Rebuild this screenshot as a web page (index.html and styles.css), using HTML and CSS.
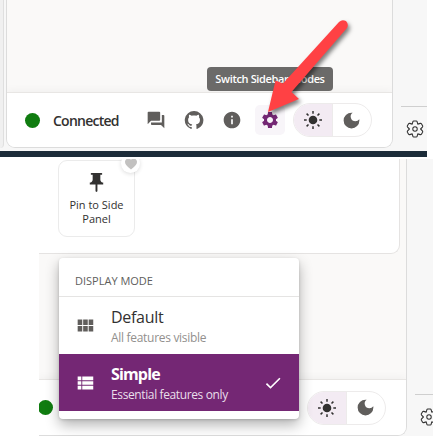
FILE: index.html
```
<!DOCTYPE html>
<html lang="en">
<head>
<meta charset="utf-8">
<title>Switch Sidebar Modes</title>
<link rel="stylesheet" href="styles.css">
</head>
<body>
<svg class="symbols" aria-hidden="true">
  <symbol id="sun" viewBox="-10 -10 20 20"><circle r="4.3"/><path d="M0-9v2.7M0 9V6.3M-9 0h2.7M9 0H6.3M-6.4-6.4l1.9 1.9M6.4-6.4l-1.9 1.9M-6.4 6.4l1.9-1.9M6.4 6.4l-1.9-1.9" stroke="currentColor" stroke-width="1.5"/></symbol>
  <symbol id="moon" viewBox="0 0 24 24"><path d="M12 3a9 9 0 1 0 9 9c0-.46-.04-.92-.1-1.36a5.39 5.39 0 0 1-4.4 2.26 5.4 5.4 0 0 1-3.14-9.8c-.44-.06-.9-.1-1.36-.1z"/></symbol>
  <symbol id="outline-gear" viewBox="-9 -9 18 18"><path d="M5.6 0L7.4 1.9Q7.9 2.5 7.6 3.2L6.4 5.2Q6 5.8 5.2 5.6L2.8 4.9L2.1 7.3Q1.9 8 1.2 8H-1.2Q-1.9 8-2.1 7.3L-2.8 4.9L-5.2 5.6Q-6 5.8-6.4 5.2L-7.6 3.2Q-7.9 2.5-7.4 1.9L-5.6 0L-7.4-1.9Q-7.9-2.5-7.6-3.2L-6.4-5.2Q-6-5.8-5.2-5.6L-2.8-4.9L-2.1-7.3Q-1.9-8-1.2-8H1.2Q1.9-8 2.1-7.3L2.8-4.9L5.2-5.6Q6-5.8 6.4-5.2L7.6-3.2Q7.9-2.5 7.4-1.9Z" fill="none" stroke="currentColor" stroke-width="1.1" stroke-linejoin="round"/><circle r="2.2" fill="none" stroke="currentColor" stroke-width="1.1"/></symbol>
</svg>

<section class="shot shot-top">
  <div class="neighbor"></div>
  <main class="panel">
    <footer class="bar">
      <span class="dot"></span>
      <span class="status">Connected</span>
      <nav class="actions">
        <button class="action"><svg width="20" height="20" viewBox="0 0 24 24"><path d="M21 6h-2v9H6v2c0 .55.45 1 1 1h11l4 4V7c0-.55-.45-1-1-1zm-4 6V3c0-.55-.45-1-1-1H3c-.55 0-1 .45-1 1v14l4-4h10c.55 0 1-.45 1-1z"/></svg></button>
        <button class="action"><svg width="20" height="20" viewBox="0 0 24 24"><path d="M12 1.27a11 11 0 0 0-3.48 21.46c.55.09.73-.28.73-.55v-1.84c-3.03.64-3.67-1.46-3.67-1.46-.55-1.29-1.28-1.65-1.28-1.65-.92-.65.1-.65.1-.65 1.1 0 1.73 1.1 1.73 1.1.92 1.65 2.57 1.2 3.21.92a2 2 0 0 1 .64-1.47c-2.47-.27-5.04-1.19-5.04-5.5 0-1.1.46-2.1 1.2-2.84a3.76 3.76 0 0 1 0-2.93s.91-.28 3.11 1.1c1.8-.49 3.7-.49 5.5 0 2.1-1.38 3.02-1.1 3.02-1.1.55 1.2.55 2.39.1 2.93.82.74 1.28 1.74 1.28 2.84 0 4.31-2.58 5.23-5.04 5.5.45.37.82.92.82 2.02v3.03c0 .27.1.64.73.55A11 11 0 0 0 12 1.27"/></svg></button>
        <button class="action"><svg width="20" height="20" viewBox="0 0 24 24"><path d="M12 2C6.48 2 2 6.48 2 12s4.48 10 10 10 10-4.48 10-10S17.52 2 12 2zm1 15h-2v-6h2v6zm0-8h-2V7h2v2z"/></svg></button>
        <button class="action active"><svg width="20" height="20" viewBox="0 0 24 24"><path d="M19.14 12.94c.04-.3.06-.61.06-.94 0-.32-.02-.64-.07-.94l2.03-1.58c.18-.14.23-.41.12-.61l-1.92-3.32c-.12-.22-.37-.29-.59-.22l-2.39.96c-.5-.38-1.03-.7-1.62-.94l-.36-2.54c-.04-.24-.24-.41-.48-.41h-3.84c-.24 0-.43.17-.47.41l-.36 2.54c-.59.24-1.13.57-1.62.94l-2.39-.96c-.22-.08-.47 0-.59.22L2.74 8.87c-.12.21-.08.47.12.61l2.03 1.58c-.05.3-.09.63-.09.94s.02.64.07.94l-2.03 1.58c-.18.14-.23.41-.12.61l1.92 3.32c.12.22.37.29.59.22l2.39-.96c.5.38 1.03.7 1.62.94l.36 2.54c.05.24.24.41.48.41h3.84c.24 0 .44-.17.47-.41l.36-2.54c.59-.24 1.13-.56 1.62-.94l2.39.96c.22.08.47 0 .59-.22l1.92-3.32c.12-.22.07-.47-.12-.61l-2.01-1.58zM12 15.6c-1.98 0-3.6-1.62-3.6-3.6s1.62-3.6 3.6-3.6 3.6 1.62 3.6 3.6-1.62 3.6-3.6 3.6z"/></svg></button>
      </nav>
      <div class="theme">
        <button class="light"><svg width="20" height="20"><use href="#sun"/></svg></button>
        <button class="dark"><svg width="21" height="21"><use href="#moon"/></svg></button>
      </div>
    </footer>
  </main>
  <aside class="edge"><svg width="18" height="18"><use href="#outline-gear"/></svg></aside>
  <div class="tooltip">Switch Sidebar Modes</div>
  <svg class="arrow" width="110" height="115" viewBox="250 10 110 115"><path d="M268 112L275.5 80.5L283 83.5L339 22Q342 19 346 21Q349 24 347 28L291.5 92L299 99Z"/></svg>
</section>

<div class="taskbar"></div>

<section class="shot shot-bottom">
  <main class="panel-lower">
    <div class="content">
      <article class="tile">
        <svg width="23" height="23" viewBox="0 0 24 24"><path d="M16 9V4h1c.55 0 1-.45 1-1s-.45-1-1-1H7c-.55 0-1 .45-1 1s.45 1 1 1h1v5c0 1.66-1.34 3-3 3v2h5.97v7l1 1 1-1v-7H19v-2c-1.66 0-3-1.34-3-3z"/></svg>
        <span class="tile-name">Pin to Side<br>Panel</span>
        <span class="favorite"><svg width="12" height="12" viewBox="2 2 20 20"><path d="M12 21.35l-1.45-1.32C5.4 15.36 2 12.28 2 8.5 2 5.42 4.42 3 7.5 3c1.74 0 3.41.81 4.5 2.09C13.09 3.81 14.76 3 16.5 3 19.58 3 22 5.42 22 8.5c0 3.78-3.4 6.86-8.55 11.54L12 21.35z"/></svg></span>
      </article>
    </div>
    <footer class="bar bar-lower">
      <span class="dot"></span>
      <div class="theme">
        <button class="light"><svg width="20" height="20"><use href="#sun"/></svg></button>
        <button class="dark"><svg width="21" height="21"><use href="#moon"/></svg></button>
      </div>
    </footer>
  </main>
  <aside class="edge edge-lower"><svg width="18" height="18"><use href="#outline-gear"/></svg></aside>
  <div class="menu">
    <div class="menu-title">DISPLAY MODE</div>
    <div class="option">
      <svg width="22" height="22" viewBox="0 0 24 24"><path d="M4 11h5V5H4v6zm0 7h5v-6H4v6zm6 0h5v-6h-5v6zm6 0h5v-6h-5v6zm-6-7h5V5h-5v6zm6-6v6h5V5h-5z"/></svg>
      <div><div class="name">Default</div><div class="hint">All features visible</div></div>
    </div>
    <div class="option selected">
      <svg width="22" height="22" viewBox="0 0 24 24"><path d="M4 14h4v-4H4v4zm0 5h4v-4H4v4zM4 9h4V5H4v4zm5 5h12v-4H9v4zm0 5h12v-4H9v4zM9 5v4h12V5H9z"/></svg>
      <div><div class="name">Simple</div><div class="hint">Essential features only</div></div>
      <svg class="check" width="20" height="20" viewBox="0 0 24 24"><path d="M9 16.17 4.83 12l-1.42 1.41L9 19 21 7l-1.41-1.41z"/></svg>
    </div>
  </div>
</section>
</body>
</html>
```
FILE: styles.css
```
* { box-sizing: border-box; }
body {
  margin: 0;
  width: 433px;
  height: 436px;
  overflow: hidden;
  background: #fff;
  color: #323130;
  font-family: "Open Sans", "Noto Sans", sans-serif;
}
svg { display: block; fill: currentColor; flex: none; }
.symbols { width: 0; height: 0; position: absolute; }
button { border: 0; padding: 0; background: none; color: #605e5c; display: grid; place-items: center; }

.shot { position: relative; display: flex; background: #f7f7f7; }
.shot-top { width: 427px; height: 151px; }
.neighbor { width: 4px; height: 148px; margin-right: 2px; background: #f0f0f0; border-right: 1px solid #dfdfdf; border-bottom-right-radius: 5px; }
.panel {
  width: 387px;
  height: 148px;
  display: flex;
  flex-direction: column;
  justify-content: flex-end;
  overflow: hidden;
  background: #faf9f8;
  border: solid #dcdcdc;
  border-width: 0 1px 1px;
  border-radius: 0 0 9px 9px;
}
.bar { height: 55px; flex: none; display: flex; align-items: center; padding: 0 20px 0 17.5px; background: #fff; border-top: 1px solid #e8e6e4; box-shadow: 0 -2px 8px rgba(0,0,0,.04); }
.dot { width: 15px; height: 15px; border-radius: 50%; background: #107c10; flex: none; }
.status { width: 82px; margin-left: 13.5px; font-size: 14px; font-weight: 600; letter-spacing: -.75px; white-space: nowrap; }
.actions { display: flex; gap: 8px; margin-left: 6px; }
.action { width: 30px; height: 30px; border-radius: 5px; }
.active { background: #f8f5f9; color: #742774; }
.theme { display: flex; width: 79px; height: 34px; margin-left: auto; flex: none; border: 1px solid #edebeb; border-radius: 17px; overflow: hidden; }
.light { width: 39px; height: 32px; background: #f3ebf3; color: #323130; border-right: 1px solid #edebeb; }
.dark { flex: 1; padding-right: 1px; }
.edge { width: 26px; height: 46px; margin: 106px 0 0 auto; padding: 13px 0 0 5px; border-top: 1px solid #cfcfcf; color: #333; overflow: hidden; }
.tooltip { position: absolute; left: 207px; top: 67px; width: 126px; height: 24px; border-radius: 4px; background: #6b6a69; color: #fff; font-size: 11px; font-weight: 600; line-height: 24px; letter-spacing: -.35px; text-align: center; white-space: nowrap; }
.arrow { position: absolute; left: 250px; top: 10px; fill: #ff4144; filter: drop-shadow(2px 3px 2px rgba(0,0,0,.5)); }
.taskbar { width: 427px; height: 6px; margin-bottom: 2px; background: #1c2c39; }

.shot-bottom { width: 394px; height: 277px; margin-left: 39px; }
.panel-lower { width: 368px; height: 277px; display: flex; flex-direction: column; justify-content: space-between; background: #faf9f8; border: solid #dcdcdc; border-width: 0 1px 1px 0; border-bottom-right-radius: 9px; overflow: hidden; }
.content { width: 361px; height: 95px; padding: 1px 19px; background: #fff; border: solid #e5e3e2; border-width: 0 1px 1px 0; border-bottom-right-radius: 9px; }
.tile { position: relative; display: flex; flex-direction: column; align-items: center; width: 77px; height: 77px; padding-top: 10px; border: 1px solid #ebebeb; border-radius: 9px; }
.tile-name { margin-top: 4px; text-align: center; font-size: 11px; font-weight: 500; line-height: 14px; letter-spacing: 0; white-space: nowrap; }
.favorite { position: absolute; right: -6px; top: -7px; width: 19px; height: 19px; display: grid; place-items: center; border-radius: 50%; background: #fff; color: #c2c1c0; box-shadow: 0 1px 4px rgba(0,0,0,.14); }
.bar-lower { height: 56px; padding: 0 20px 0 0; }
.bar-lower .dot { margin-left: -1px; }
.edge-lower { width: 18px; margin-top: 235px; height: 42px; }
.menu { position: absolute; left: 20px; top: 99px; width: 240px; height: 161px; overflow: hidden; border-radius: 4px; background: #fff; box-shadow: 0 6px 14px rgba(0,0,0,.3), 0 1px 3px rgba(0,0,0,.15); }
.menu-title { height: 39px; padding: 7px 16px 0; border-bottom: 1px solid #e5e4e3; color: #605e5c; font-size: 11px; font-weight: 500; line-height: 32px; letter-spacing: 0; }
.option { height: 57px; display: flex; align-items: center; padding: 0 16px 0 15px; gap: 15px; color: #605e5c; }
.option > div { width: 150px; padding-top: 4px; }
.name { color: #323130; font-size: 16px; line-height: 21px; letter-spacing: -.3px; }
.hint { color: #92908e; font-size: 12px; line-height: 20px; letter-spacing: -.3px; white-space: nowrap; }
.selected { background: #742774; color: #fff; }
.selected .name { color: #fff; font-weight: 700; letter-spacing: -.85px; }
.selected .hint { color: #eadfea; letter-spacing: -.38px; }
.check { margin-left: 2px; }
```
